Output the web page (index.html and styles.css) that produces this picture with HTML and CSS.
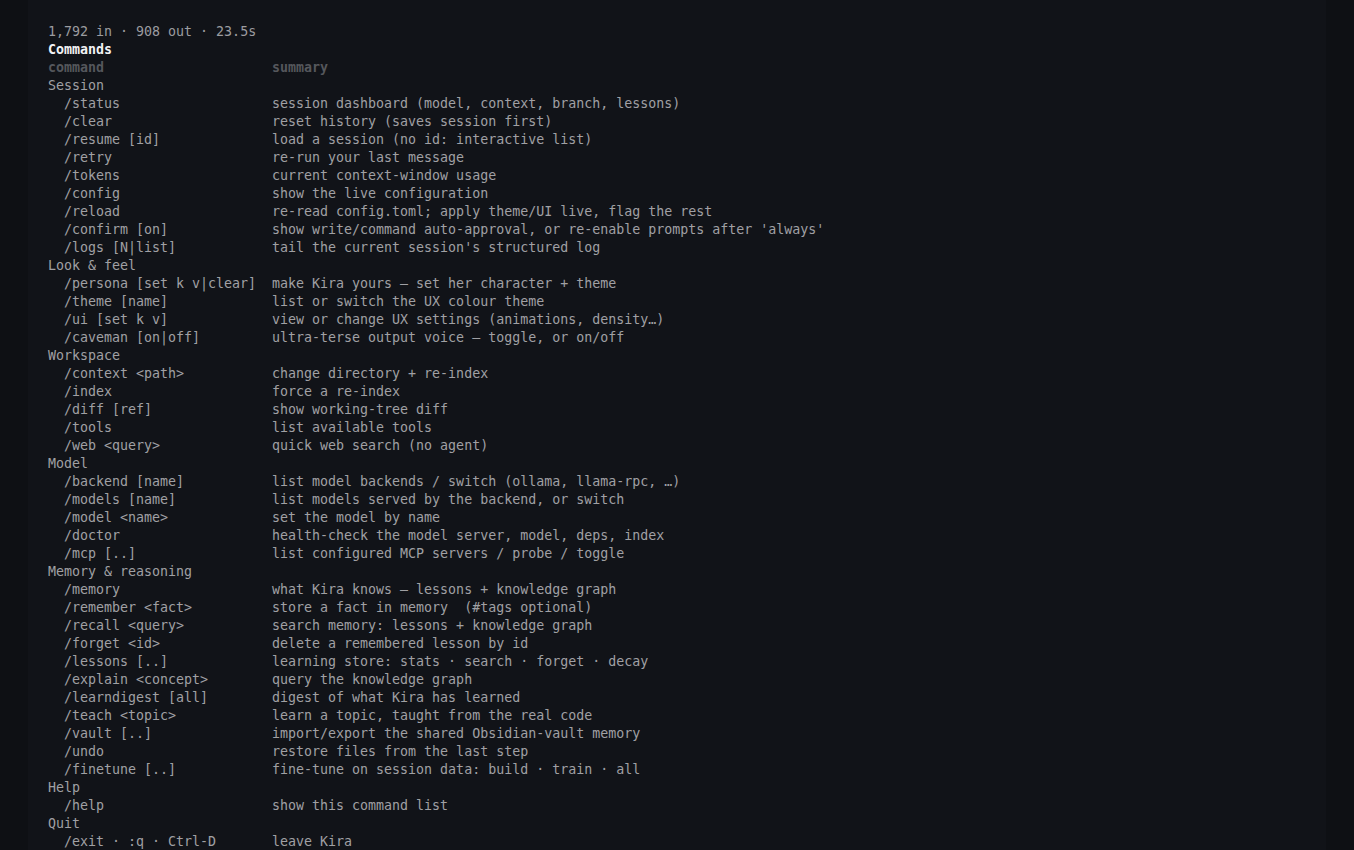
FILE: index.html
```html
<!DOCTYPE html>
<html>
<head>
<meta charset="utf-8">
<link rel="stylesheet" href="styles.css">
</head>
<body>
<div class="panel">
  <div class="line meta">1,792 in · 908 out · 23.5s</div>
  <div class="line title">Commands</div>
  <div class="row head"><span>command</span><span>summary</span></div>

  <div class="line group">Session</div>
  <div class="row"><span class="cmd">/status</span><span>session dashboard (model, context, branch, lessons)</span></div>
  <div class="row"><span class="cmd">/clear</span><span>reset history (saves session first)</span></div>
  <div class="row"><span class="cmd">/resume [id]</span><span>load a session (no id: interactive list)</span></div>
  <div class="row"><span class="cmd">/retry</span><span>re-run your last message</span></div>
  <div class="row"><span class="cmd">/tokens</span><span>current context-window usage</span></div>
  <div class="row"><span class="cmd">/config</span><span>show the live configuration</span></div>
  <div class="row"><span class="cmd">/reload</span><span>re-read config.toml; apply theme/UI live, flag the rest</span></div>
  <div class="row"><span class="cmd">/confirm [on]</span><span>show write/command auto-approval, or re-enable prompts after 'always'</span></div>
  <div class="row"><span class="cmd">/logs [N|list]</span><span>tail the current session's structured log</span></div>

  <div class="line group">Look &amp; feel</div>
  <div class="row"><span class="cmd">/persona [set k v|clear]</span><span>make Kira yours — set her character + theme</span></div>
  <div class="row"><span class="cmd">/theme [name]</span><span>list or switch the UX colour theme</span></div>
  <div class="row"><span class="cmd">/ui [set k v]</span><span>view or change UX settings (animations, density…)</span></div>
  <div class="row"><span class="cmd">/caveman [on|off]</span><span>ultra-terse output voice — toggle, or on/off</span></div>

  <div class="line group">Workspace</div>
  <div class="row"><span class="cmd">/context &lt;path&gt;</span><span>change directory + re-index</span></div>
  <div class="row"><span class="cmd">/index</span><span>force a re-index</span></div>
  <div class="row"><span class="cmd">/diff [ref]</span><span>show working-tree diff</span></div>
  <div class="row"><span class="cmd">/tools</span><span>list available tools</span></div>
  <div class="row"><span class="cmd">/web &lt;query&gt;</span><span>quick web search (no agent)</span></div>

  <div class="line group">Model</div>
  <div class="row"><span class="cmd">/backend [name]</span><span>list model backends / switch (ollama, llama-rpc, …)</span></div>
  <div class="row"><span class="cmd">/models [name]</span><span>list models served by the backend, or switch</span></div>
  <div class="row"><span class="cmd">/model &lt;name&gt;</span><span>set the model by name</span></div>
  <div class="row"><span class="cmd">/doctor</span><span>health-check the model server, model, deps, index</span></div>
  <div class="row"><span class="cmd">/mcp [..]</span><span>list configured MCP servers / probe / toggle</span></div>

  <div class="line group">Memory &amp; reasoning</div>
  <div class="row"><span class="cmd">/memory</span><span>what Kira knows — lessons + knowledge graph</span></div>
  <div class="row"><span class="cmd">/remember &lt;fact&gt;</span><span>store a fact in memory  (#tags optional)</span></div>
  <div class="row"><span class="cmd">/recall &lt;query&gt;</span><span>search memory: lessons + knowledge graph</span></div>
  <div class="row"><span class="cmd">/forget &lt;id&gt;</span><span>delete a remembered lesson by id</span></div>
  <div class="row"><span class="cmd">/lessons [..]</span><span>learning store: stats · search · forget · decay</span></div>
  <div class="row"><span class="cmd">/explain &lt;concept&gt;</span><span>query the knowledge graph</span></div>
  <div class="row"><span class="cmd">/learndigest [all]</span><span>digest of what Kira has learned</span></div>
  <div class="row"><span class="cmd">/teach &lt;topic&gt;</span><span>learn a topic, taught from the real code</span></div>
  <div class="row"><span class="cmd">/vault [..]</span><span>import/export the shared Obsidian-vault memory</span></div>
  <div class="row"><span class="cmd">/undo</span><span>restore files from the last step</span></div>
  <div class="row"><span class="cmd">/finetune [..]</span><span>fine-tune on session data: build · train · all</span></div>

  <div class="line group">Help</div>
  <div class="row"><span class="cmd">/help</span><span>show this command list</span></div>

  <div class="line group">Quit</div>
  <div class="row"><span class="cmd">/exit · :q · Ctrl-D</span><span>leave Kira</span></div>
</div>
</body>
</html>
```

FILE: styles.css
```css
html, body {
  margin: 0;
  padding: 0;
  background: #0e1014;
  height: 100%;
  overflow: hidden;
}

.panel {
  margin: 0 28px;
  min-height: 100%;
  background: #111318;
  padding: 23px 20px 0 20px;
  box-sizing: border-box;
  font-family: "DejaVu Sans Mono", "Liberation Mono", monospace;
  font-size: 13.3px;
  line-height: 18px;
  color: #a0a0a4;
}

.line {
  height: 18px;
  white-space: pre;
}

.meta {
  color: #9c9ca0;
}

.title {
  color: #f2f2f4;
  font-weight: bold;
}

.row {
  display: grid;
  grid-template-columns: 224px auto;
  height: 18px;
}

.row span {
  white-space: pre;
}

.head {
  color: #55575c;
  font-weight: bold;
}

.cmd {
  padding-left: 16px;
}

.group {
  color: #a0a0a4;
}
```
